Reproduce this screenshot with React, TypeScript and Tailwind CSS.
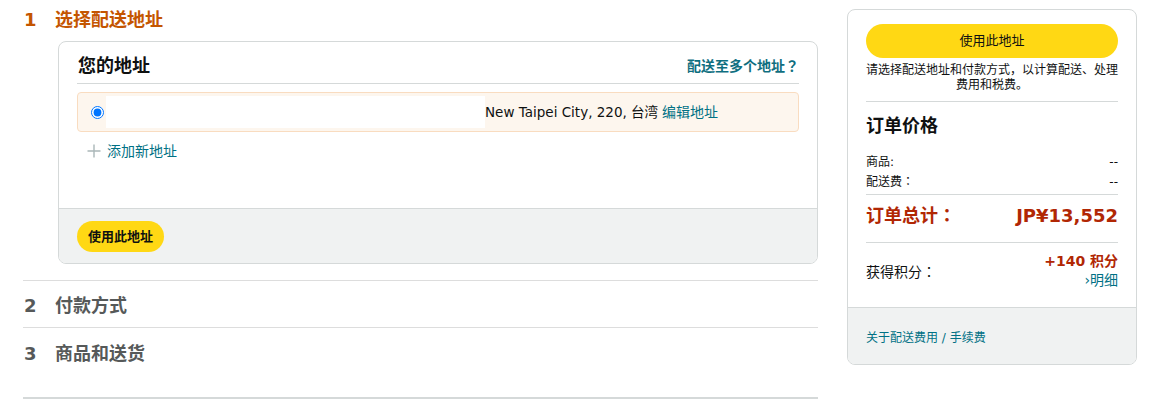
const font = { fontFamily: '"DejaVu Sans", "Noto Sans CJK SC", sans-serif' };
const jp = { fontFamily: '"Noto Sans CJK JP", sans-serif' };

// full-width punctuation centred in its cell, as in the screenshot
function P({ c }: { c: string }) {
  return (
    <span className="leading-none" style={jp}>
      {c}
    </span>
  );
}

function StepRow({ n, label }: { n: string; label: string }) {
  return (
    <div className="flex items-center text-[18px] font-bold leading-[22px] text-[#565959]">
      <span className="w-[32px] pl-[1px]">{n}</span>
      <span>{label}</span>
    </div>
  );
}

function AddressBox() {
  return (
    <div className="ml-[35px] overflow-hidden rounded-[8px] border border-[#d5d9d9]">
      <div className="px-[18px] pb-[48px] pt-[13px]">
        <div className="flex items-center justify-between border-b border-[#d5d9d9] pb-[6px] pl-[1px]">
          <h2 className="text-[18px] font-bold leading-[22px] text-[#0f1111]">您的地址</h2>
          <a className="text-[14px] font-bold leading-[18px] text-[#0f6e7f]">
            配送至多个地址<P c="？" />
          </a>
        </div>
        <div className="mt-[8px] flex h-[40px] items-center rounded-[4px] border border-[#f9dcc0] bg-[#fdf6ee] pl-[13px]">
          <input type="radio" checked readOnly className="m-0 h-[13px] w-[13px]" />
          <div className="ml-[2px] h-[32px] w-[379px] bg-white" />
          <span className="text-[13.5px] leading-[18px] text-[#0f1111]">New Taipei City, 220, 台湾</span>
          <a className="ml-[4px] text-[14px] leading-[18px] text-[#007185]">编辑地址</a>
        </div>
        <div className="mt-[10px] flex items-center pl-[10px] text-[14px] leading-[18px] text-[#007185]">
          <svg width="14" height="14" viewBox="0 0 14 14" className="mr-[6px]">
            <path d="M7 0.5v13M0.5 7h13" stroke="#aab7b8" strokeWidth="1.4" />
          </svg>
          添加新地址
        </div>
      </div>
      <div className="border-t border-[#d5d9d9] bg-[#f0f2f2] px-[18px] pb-[11px] pt-[12px]">
        <button className="h-[31px] rounded-full bg-[#ffd814] px-[11px] text-[13px] font-bold leading-[16px] text-[#0f1111]">
          使用此地址
        </button>
      </div>
    </div>
  );
}

function Summary() {
  return (
    <div className="mt-[9px] flex h-[356px] w-[290px] flex-col overflow-hidden rounded-[8px] border border-[#d5d9d9]">
      <div className="flex-1 px-[18px] pt-[14px]">
        <button className="h-[34px] w-full rounded-full bg-[#ffd814] text-[13px] leading-[16px] text-[#0f1111]">
          使用此地址
        </button>
        <p className="mt-[5px] text-center text-[12px] leading-[15px] text-[#0f1111]">
          请选择配送地址和付款方式，以计算配送、处理费用和税费。
        </p>
        <div className="mt-[8px] border-t border-[#d5d9d9]" />
        <h3 className="mt-[13px] text-[18px] font-bold leading-[22px] text-[#0f1111]">订单价格</h3>
        <div className="mt-[15px] text-[12px] leading-[20px] text-[#0f1111]">
          <div className="flex justify-between">
            <span>商品:</span>
            <span>--</span>
          </div>
          <div className="flex justify-between">
            <span>
              配送费<P c="：" />
            </span>
            <span>--</span>
          </div>
        </div>
        <div className="mt-[2px] border-t border-[#d5d9d9]" />
        <div className="mt-[9px] flex items-center justify-between text-[18px] font-bold leading-[24px] text-[#b12704]">
          <span>
            订单总计<P c="：" />
          </span>
          <span>JP¥13,552</span>
        </div>
        <div className="mt-[14px] border-t border-[#d5d9d9]" />
        <div className="mt-[9px] flex items-center justify-between">
          <span className="pt-[2px] text-[14px] leading-[18px] text-[#0f1111]">
            获得积分<P c="：" />
          </span>
          <div className="text-right text-[14px] leading-[19px]">
            <div className="font-bold text-[#b12704]">+140 积分</div>
            <a className="text-[#007185]">›明细</a>
          </div>
        </div>
      </div>
      <div className="h-[57px] border-t border-[#d5d9d9] bg-[#f0f2f2] px-[18px] pt-[22px] text-[12px] leading-[17px] text-[#007185]">
        关于配送费用 / 手续费
      </div>
    </div>
  );
}

export default function App() {
  return (
    <div className="flex h-[406px] w-[1163px] bg-white pl-[23px]" style={font}>
      <div className="w-[795px]">
        <div className="flex h-[41px] items-start pt-[9px] text-[18px] font-bold leading-[22px] text-[#c45500]">
          <span className="w-[32px] pl-[1px]">1</span>
          <span>选择配送地址</span>
        </div>
        <AddressBox />
        <div className="mt-[16px] border-t border-[#dddddd] pb-[10px] pt-[14px]">
          <StepRow n="2" label="付款方式" />
        </div>
        <div className="h-[70px] border-t border-[#dddddd] pt-[15px]">
          <StepRow n="3" label="商品和送货" />
        </div>
        <div className="border-t-2 border-[#d5d9d9]" />
      </div>
      <div className="ml-[29px]">
        <Summary />
      </div>
    </div>
  );
}
